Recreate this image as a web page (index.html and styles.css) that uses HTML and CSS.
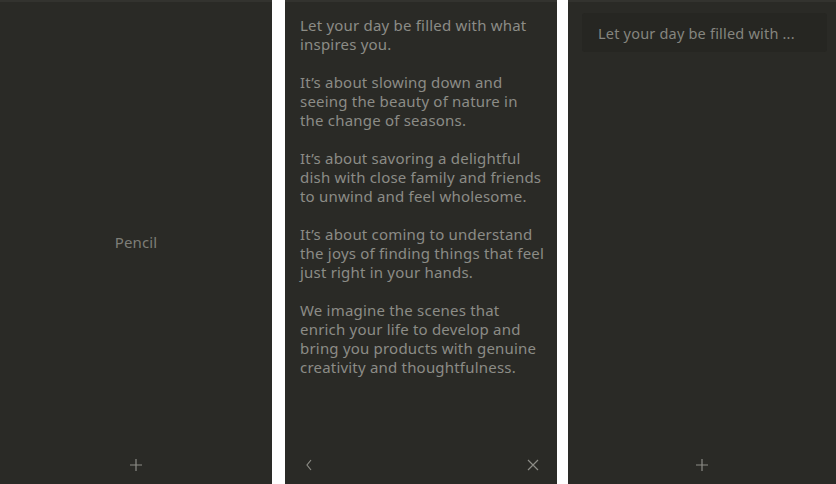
FILE: index.html
```html
<!DOCTYPE html>
<html>
<head>
<meta charset="utf-8">
<link rel="stylesheet" href="styles.css">
</head>
<body>
<div class="screens">
  <section class="panel panel-a">
    <div class="center-label">Pencil</div>
    <div class="bottom-bar bar-center">
      <svg class="icon" width="14" height="14" viewBox="0 0 14 14"><path d="M7 1V13M1 7H13" stroke="#8c8c86" stroke-width="1.2" fill="none"/></svg>
    </div>
  </section>
  <section class="panel panel-b">
    <div class="article">
      <p>Let your day be filled with what<br>inspires you.</p>
      <p>It’s about slowing down and<br>seeing the beauty of nature in<br>the change of seasons.</p>
      <p>It’s about savoring a delightful<br>dish with close family and friends<br>to unwind and feel wholesome.</p>
      <p>It’s about coming to understand<br>the joys of finding things that feel<br>just right in your hands.</p>
      <p>We imagine the scenes that<br>enrich your life to develop and<br>bring you products with genuine<br>creativity and thoughtfulness.</p>
    </div>
    <div class="bottom-bar bar-split">
      <svg class="icon" width="10" height="14" viewBox="0 0 10 14"><path d="M7 2L3 7L7 12" stroke="#8c8c86" stroke-width="1.2" fill="none"/></svg>
      <svg class="icon" width="14" height="14" viewBox="0 0 14 14"><path d="M2 2L12 12M12 2L2 12" stroke="#8c8c86" stroke-width="1.2" fill="none"/></svg>
    </div>
  </section>
  <section class="panel panel-c">
    <div class="note-card">Let your day be filled with ...</div>
    <div class="bottom-bar bar-center">
      <svg class="icon" width="14" height="14" viewBox="0 0 14 14"><path d="M7 1V13M1 7H13" stroke="#8c8c86" stroke-width="1.2" fill="none"/></svg>
    </div>
  </section>
</div>
</body>
</html>
```
FILE: styles.css
```css
html, body {
  margin: 0;
  padding: 0;
  background: #ffffff;
}
body {
  font-family: "Noto Sans", "Liberation Sans", sans-serif;
}
.screens {
  display: flex;
  height: 484px;
  width: 836px;
}
.panel {
  background: #2a2a26;
  border-top: 2px solid #33332f;
  box-sizing: border-box;
  height: 484px;
  display: flex;
  flex-direction: column;
}
.panel-a {
  width: 272px;
  margin-right: 13px;
}
.panel-b {
  width: 272px;
  margin-right: 11px;
}
.panel-c {
  width: 268px;
}
.center-label {
  flex: 1;
  display: flex;
  align-items: center;
  justify-content: center;
  color: #7e7e78;
  font-size: 15px;
  letter-spacing: 0.1px;
  padding-top: 38px;
}
.article {
  flex: 1;
  padding: 14px 15px 0 15px;
  color: #8c8c86;
  font-size: 15px;
  letter-spacing: 0.2px;
  line-height: 19px;
}
.article p {
  margin: 0 0 19px 0;
  white-space: nowrap;
}
.note-card {
  margin: 11px 9px 0 14px;
  height: 39px;
  background: #262622;
  border-radius: 3px;
  color: #85857f;
  font-size: 14.5px;
  letter-spacing: 0.2px;
  line-height: 40px;
  padding-left: 16px;
}
.panel-c .note-card + .bottom-bar {
  margin-top: auto;
}
.bottom-bar {
  height: 38px;
  display: flex;
  align-items: center;
  padding-top: 2px;
}
.bar-center {
  justify-content: center;
}
.bar-split {
  justify-content: space-between;
  padding-left: 19px;
  padding-right: 17px;
}
.icon {
  display: block;
}
```
